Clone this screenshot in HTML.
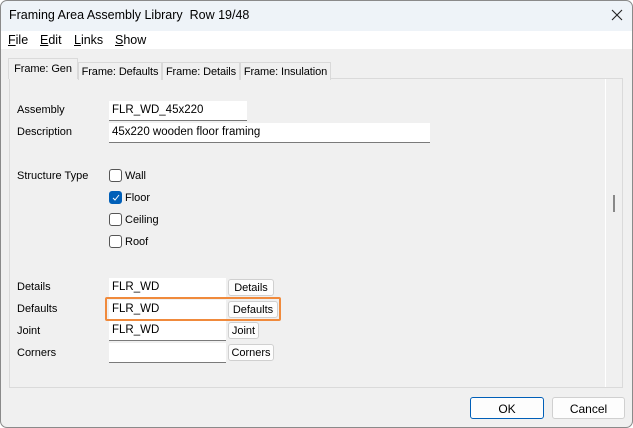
<!DOCTYPE html>
<html><head><style>
*{box-sizing:border-box;margin:0;padding:0}
body{width:633px;height:428px;overflow:hidden;background:#fff;font-family:"Liberation Sans",sans-serif;font-size:12px;color:#000}
.win{position:absolute;left:0;top:0;width:633px;height:428px;border-radius:7px;overflow:hidden;background:#f0f0f0}
.frame{position:absolute;left:0;top:0;width:633px;height:428px;border:1px solid #8a8a8a;border-radius:7px;z-index:10}
.title{position:absolute;left:0;top:0;width:633px;height:31px;background:#eef3f8;font-size:12.5px}
.title span{position:absolute;left:9px;top:8px}
.menu{position:absolute;left:0;top:31px;width:633px;height:18px;background:#fff;font-size:12.5px}
.menu span{position:absolute;top:2px}
.tab{position:absolute;top:61px;height:18px;border:1px solid #d9d9d9;border-bottom:none;background:#f0f0f0;font-size:11px;text-align:center;padding-top:3px;letter-spacing:-0.1px}
.panel{position:absolute;left:9px;top:78px;width:614px;height:310px;border:1px solid #dadada;background:#f0f0f0}
.inp{position:absolute;background:#fff;border-bottom:1px solid #7a7a7a;font-size:11.5px;padding:3px 0 0 3px;height:20px}
.btn{position:absolute;background:#fdfdfd;border:1px solid #d0d0d0;border-radius:3px;font-size:11px;text-align:center;height:17px;padding-top:2px}
.cb{position:absolute;left:109px;width:13px;height:13px;border:1px solid #555;border-radius:3px;background:#fff}
.lbl{position:absolute;font-size:11px}
</style></head><body>
<div class="win">
<div class="title"><span>Framing Area Assembly Library&nbsp; Row 19/48</span>
<svg style="position:absolute;left:611px;top:9px" width="12" height="12"><path d="M1 1L11 11M11 1L1 11" stroke="#222" stroke-width="1.1"/></svg></div>
<div class="menu"><span style="left:8px"><u>F</u>ile</span><span style="left:40px"><u>E</u>dit</span><span style="left:74px"><u>L</u>inks</span><span style="left:115px"><u>S</u>how</span></div>
<div class="panel">
<div style="position:absolute;left:595px;top:0;width:1px;height:308px;background:#fff"></div>
<div style="position:absolute;left:603px;top:116px;width:2px;height:17px;background:#888"></div>
</div>
<div class="tab" style="left:8px;top:58px;height:21px;width:70px;z-index:2;border-color:#dadada;padding-top:4px">Frame: Gen</div>
<div class="tab" style="left:78px;width:84px;top:62px">Frame: Defaults</div>
<div class="tab" style="left:162px;width:78px;top:62px">Frame: Details</div>
<div class="tab" style="left:240px;width:91px;top:62px">Frame: Insulation</div>
<div class="lbl" style="left:17px;top:104px">Assembly</div>
<div class="lbl" style="left:17px;top:126px">Description</div>
<div class="inp" style="left:109px;top:101px;width:138px">FLR_WD_45x220</div>
<div class="inp" style="left:109px;top:123px;width:321px">45x220 wooden floor framing</div>
<div class="lbl" style="left:17px;top:170px">Structure Type</div>
<div class="cb" style="top:169px"></div><div class="lbl" style="left:125px;top:170px">Wall</div>
<div class="cb" style="top:191px;background:#005fb8;border-color:#005fb8"><svg width="11" height="11" style="position:absolute;left:0;top:0"><path d="M3 6L5 8L9 3" stroke="#fff" stroke-width="1" fill="none"/></svg></div><div class="lbl" style="left:125px;top:192px">Floor</div>
<div class="cb" style="top:213px"></div><div class="lbl" style="left:125px;top:214px">Ceiling</div>
<div class="cb" style="top:235px"></div><div class="lbl" style="left:125px;top:236px">Roof</div>
<div class="lbl" style="left:17px;top:281px">Details</div>
<div class="lbl" style="left:17px;top:303px">Defaults</div>
<div class="lbl" style="left:17px;top:325px">Joint</div>
<div class="lbl" style="left:17px;top:347px">Corners</div>
<div class="inp" style="left:109px;top:278px;width:117px">FLR_WD</div>
<div class="inp" style="left:109px;top:300px;width:117px">FLR_WD</div>
<div class="inp" style="left:109px;top:321px;width:117px">FLR_WD</div>
<div class="inp" style="left:109px;top:343px;width:117px"></div>
<div class="btn" style="left:228px;top:279px;width:46px">Details</div>
<div class="btn" style="left:228px;top:301px;width:50px">Defaults</div>
<div class="btn" style="left:228px;top:322px;width:31px">Joint</div>
<div class="btn" style="left:228px;top:344px;width:46px">Corners</div>
<div style="position:absolute;left:105px;top:297px;width:176px;height:24px;border:2px solid #f08a3c;border-radius:2px"></div>
<div class="btn" style="left:470px;top:397px;width:74px;height:22px;border-color:#005fb8;padding-top:4px;font-size:12px">OK</div>
<div class="btn" style="left:552px;top:397px;width:73px;height:22px;padding-top:4px;font-size:12px">Cancel</div>
</div>
<div class="frame"></div>
</body></html>
